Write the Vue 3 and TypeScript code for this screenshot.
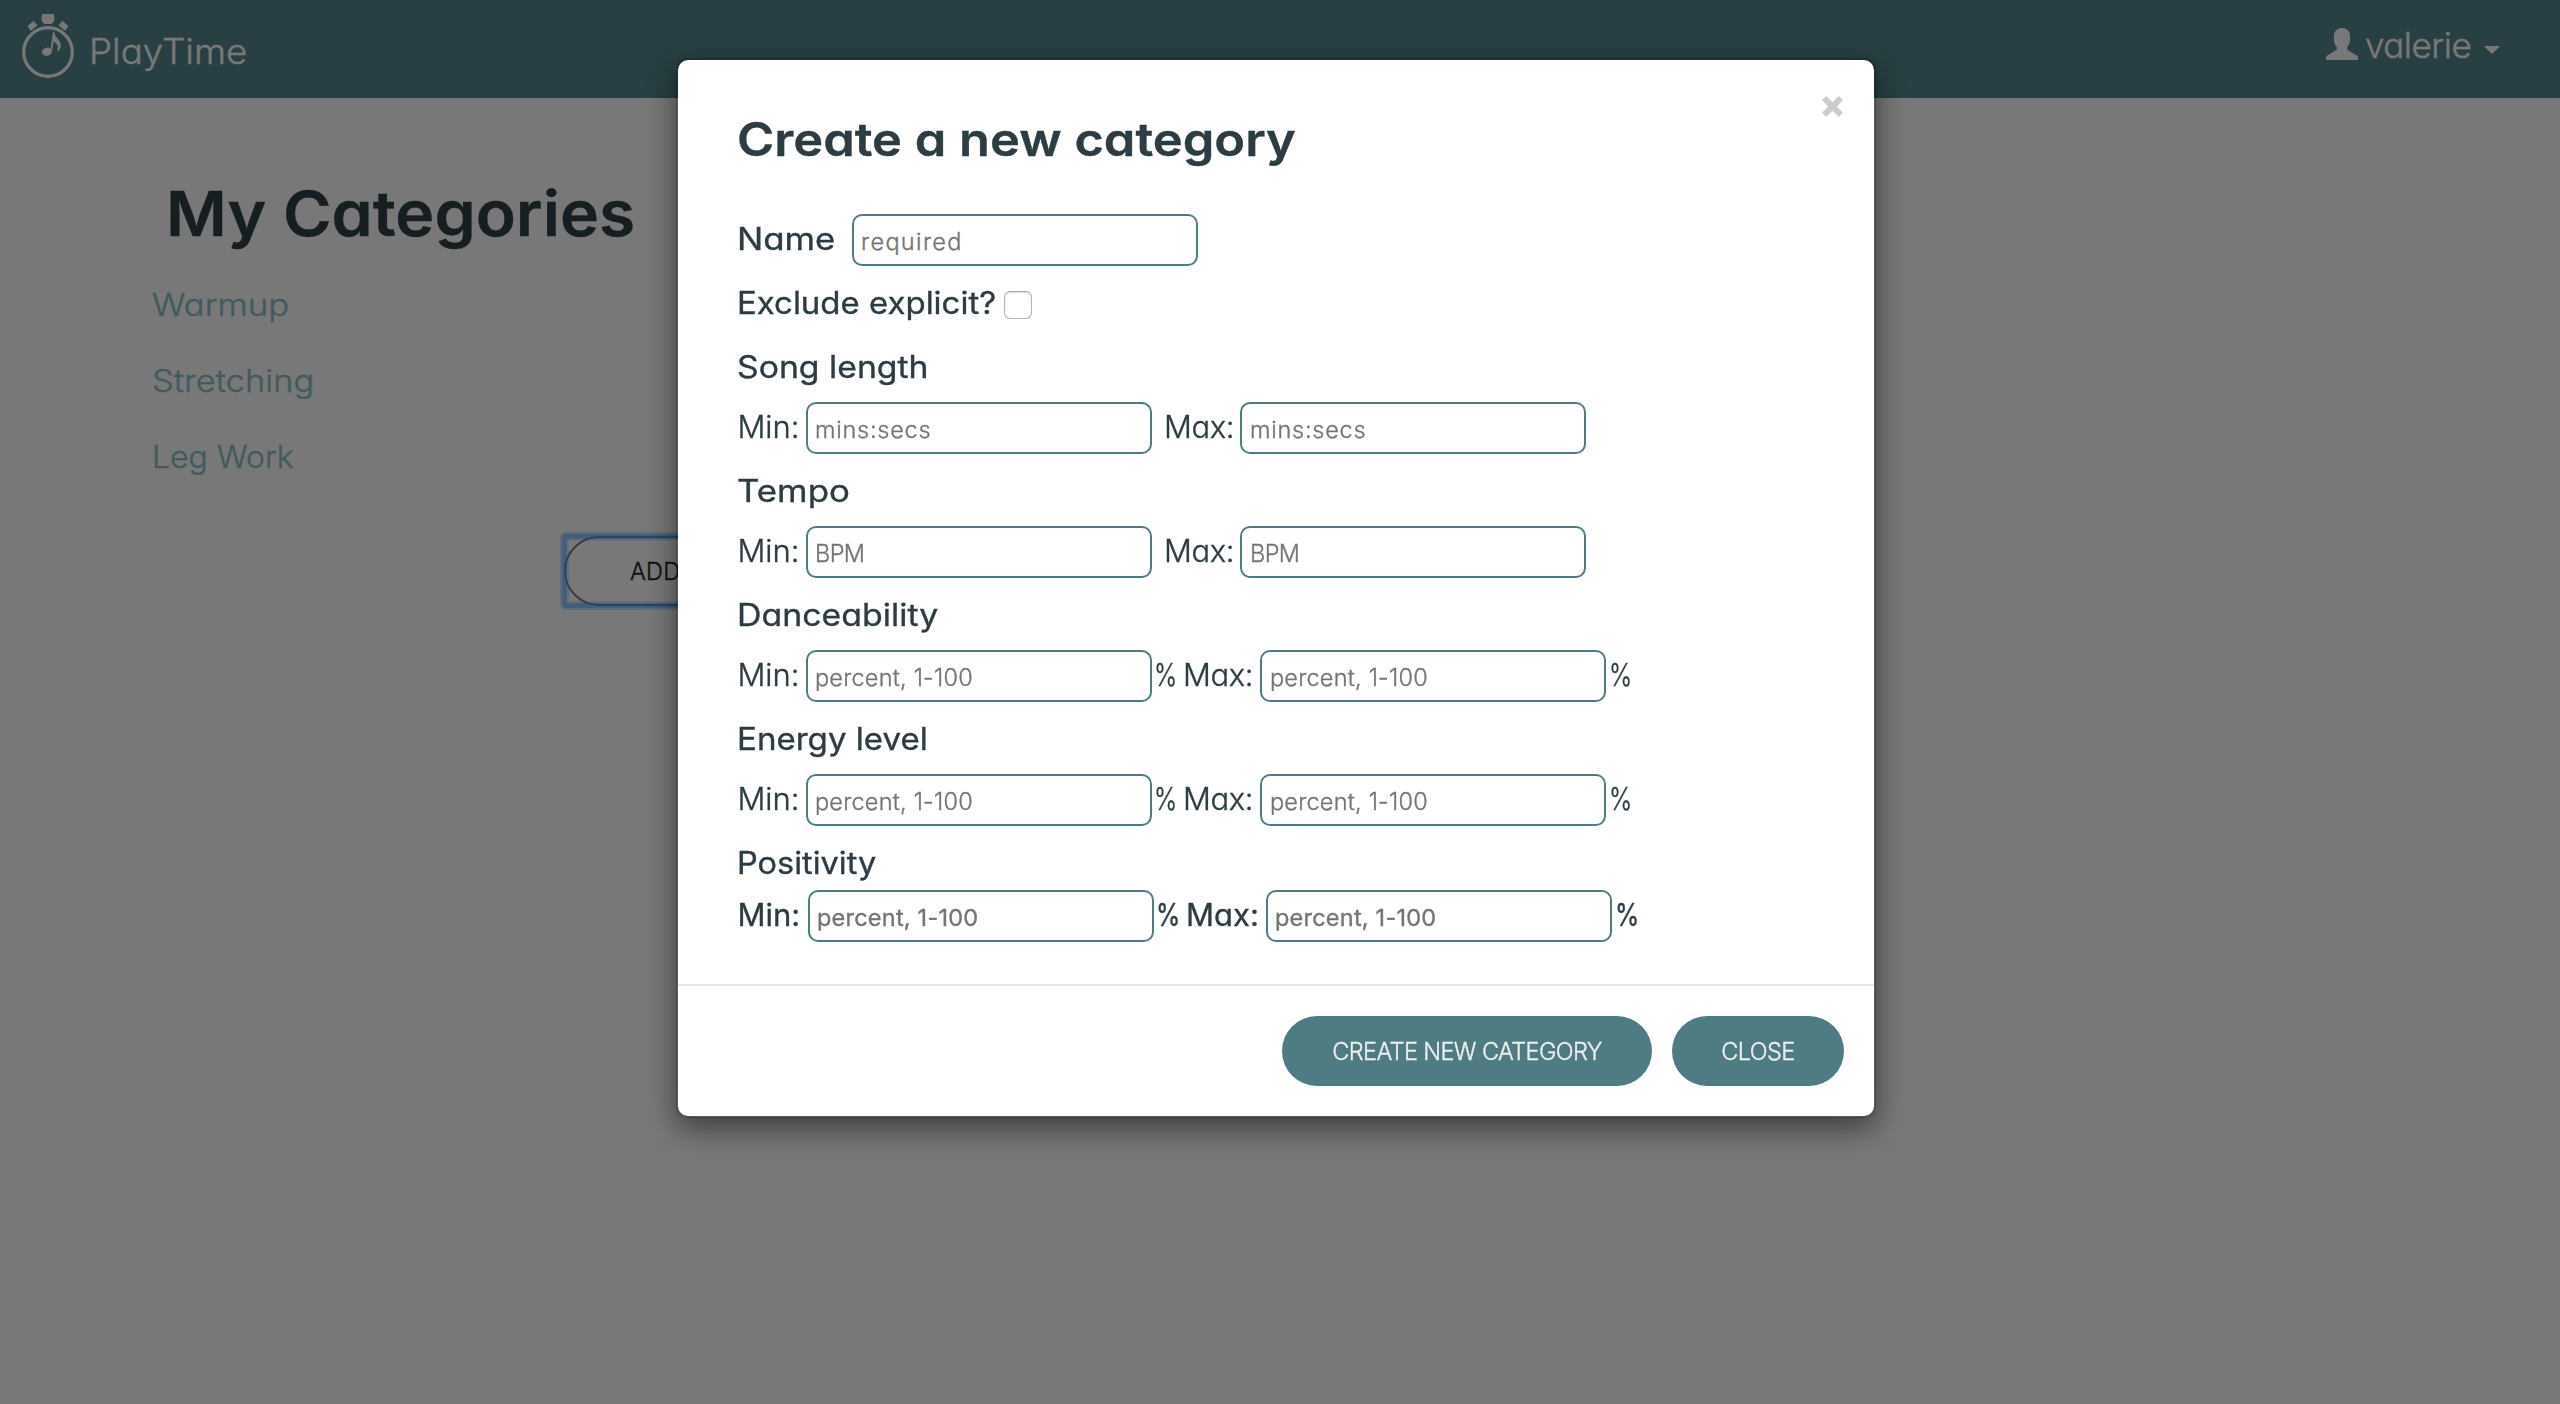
<script setup lang="ts">
interface Range {
  title: string
  hint: string
  hintClass: string
  titleClass: string
  percent: boolean
  strong?: boolean
}

const categories: { name: string; cls: string }[] = [
  { name: 'Warmup', cls: 'cat-warmup' },
  { name: 'Stretching', cls: 'cat-stretching' },
  { name: 'Leg Work', cls: 'cat-leg' },
]

const ranges: Range[] = [
  { title: 'Song length', hint: 'mins:secs', hintClass: 'hint-time', titleClass: 't-song', percent: false },
  { title: 'Tempo', hint: 'BPM', hintClass: 'hint-bpm', titleClass: 't-tempo', percent: false },
  { title: 'Danceability', hint: 'percent, 1-100', hintClass: 'hint-pct', titleClass: 't-dance', percent: true },
  { title: 'Energy level', hint: 'percent, 1-100', hintClass: 'hint-pct', titleClass: 't-energy', percent: true },
  { title: 'Positivity', hint: 'percent, 1-100', hintClass: 'hint-pct', titleClass: 't-pos', percent: true, strong: true },
]
</script>

<template>
  <div class="page">
    <nav class="navbar">
      <div class="brand">
        <svg class="logo" viewBox="0 0 52 64" width="52" height="64">
          <circle cx="26" cy="38" r="24.3" fill="none" stroke="currentColor" stroke-width="3.2" />
          <path d="M20.5 0h11q1.200 2 1 4.500q-.3 4.500-3.500 5.500h-6q-3.200-1-3.500-5.500q-.2-2.500 1-4.500z" fill="currentColor" />
          <path d="M6.500 12.200l5-4.500 2.900 3.600-5.600 4.500z" fill="currentColor" stroke="currentColor" stroke-width="1.500" stroke-linejoin="round" />
          <path d="M45.500 12.200l-5-4.500-2.900 3.600 5.600 4.500z" fill="currentColor" stroke="currentColor" stroke-width="1.500" stroke-linejoin="round" />
          <ellipse cx="25" cy="37.700" rx="5" ry="4.100" transform="rotate(-12 25 37.700)" fill="currentColor" />
          <path d="M28.200 37.500L31 18h1.400c.2 5.500 6.400 8 6.400 13.500 0 2-.9 4.300-2.600 5.800l-1-.6c1.600-4 .3-7.200-3.700-9.200L29.900 38z" fill="currentColor" />
        </svg>
        <span class="brand-name">PlayTime</span>
      </div>
      <div class="user">
        <svg class="person" viewBox="0 0 32 32" width="32" height="32">
          <path d="M16 0C20.500 0 24 3.200 24 8v4c0 3-1.500 5.500-3 7.500 0 1.500.5 2.300 1.500 3l8 4.700c1 .8 1.500 1.300 1.500 2.300V32H0v-2.500c0-1 .5-1.500 1.500-2.300l8-4.700c1-.7 1.500-1.500 1.500-3-1.500-2-3-4.500-3-7.500V8c0-4.800 3.500-8 8-8z" fill="currentColor" />
        </svg>
        <span class="user-name">valerie</span>
        <span class="caret"></span>
      </div>
    </nav>

    <main class="content">
      <h1>My Categories</h1>
      <ul class="categories">
        <li v-for="c in categories" :key="c.name"><a :class="c.cls">{{ c.name }}</a></li>
      </ul>
      <div class="add">ADD</div>
    </main>

    <div class="backdrop">
      <section class="modal">
        <header class="modal-header">
          <h2>Create a new category</h2>
          <svg class="close" viewBox="0 0 21 21" width="21" height="21">
            <path d="M4.300 0L10.500 6.200 16.700 0 21 4.300 14.800 10.500 21 16.700 16.700 21 10.500 14.800 4.300 21 0 16.700 6.200 10.500 0 4.300z" fill="#ccc" />
          </svg>
        </header>

        <div class="modal-body">
          <div class="row">
            <label class="name-label">Name</label>
            <input class="hint-req" type="text" placeholder="required" />
          </div>
          <div class="explicit">
            <label>Exclude explicit?</label>
            <input type="checkbox" />
          </div>
          <div v-for="r in ranges" :key="r.title" class="range" :class="{ percent: r.percent, strong: r.strong }">
            <h3 :class="r.titleClass">{{ r.title }}</h3>
            <div class="row">
              <label class="min">Min:</label>
              <input :class="r.hintClass" type="text" :placeholder="r.hint" />
              <span v-if="r.percent" class="unit"><span>%</span></span>
              <label class="max">Max:</label>
              <input :class="r.hintClass" type="text" :placeholder="r.hint" />
              <span v-if="r.percent" class="unit last"><span>%</span></span>
            </div>
          </div>
        </div>

        <footer class="modal-footer">
          <button class="create">CREATE NEW CATEGORY</button>
          <button class="dismiss">CLOSE</button>
        </footer>
      </section>
    </div>
  </div>
</template>

<style>
html,
body {
  margin: 0;
  background: #f0f0f0;
  overflow: hidden;
}
</style>

<style scoped>
.page {
  width: 2560px;
  height: 1404px;
  background: #f0f0f0;
  font-family: Inter, 'Open Sans', sans-serif;
  font-feature-settings: 'cv11';
  font-size: 31px;
  font-weight: 340;
  color: #2c3c42;
  white-space: nowrap;
  -webkit-text-stroke: 0.350px;
}

.page * {
  box-sizing: border-box;
}

/* Navigation bar */
.navbar {
  display: flex;
  justify-content: space-between;
  align-items: flex-start;
  height: 98px;
  padding: 0 60px 0 22px;
  background: #508086;
  color: #f0f0f0;
  font-size: 35px;
  line-height: 40px;
}

.brand,
.user {
  display: flex;
  align-items: flex-start;
}

.logo {
  margin-top: 14px;
}

.brand-name {
  margin: 31px 0 0 15px;
  transform: scaleX(1.05);
  transform-origin: left;
}

.person {
  margin-top: 28px;
}

.user-name {
  width: 118px;
  margin: 25px 0 0 7px;
  letter-spacing: -0.500px;
}

.caret {
  margin-top: 46px;
  margin-left: 1px;
  border-top: 8px solid #f0f0f0;
  border-left: 8px solid transparent;
  border-right: 8px solid transparent;
}

/* Category list */
.content {
  padding: 75px 0 0 152px;
}

h1 {
  width: fit-content;
  margin: 0 0 14px 13.500px;
  font-size: 62.500px;
  line-height: 80px;
  font-weight: 600;
  transform: scaleX(1.056);
  transform-origin: left;
}

.categories {
  margin: 0;
  padding: 0;
  list-style: none;
  line-height: 76px;
  color: #84b4bc;
}

.categories a {
  display: inline-block;
  transform-origin: left;
}

.cat-warmup {
  transform: scaleX(1.12);
}

.cat-stretching {
  transform: scaleX(1.11);
}

.cat-leg {
  transform: scaleX(1.03);
}

.add {
  position: relative;
  width: 300px;
  height: 70px;
  margin: 41px 0 0 412px;
  padding-left: 64px;
  border: 2px solid #777;
  border-radius: 35px;
  font-size: 23.500px;
  line-height: 68px;
  color: #222;
  letter-spacing: 0.300px;
}

.add::after {
  content: '';
  position: absolute;
  inset: -4px;
  border: 5px solid rgba(59, 153, 252, 0.58);
  border-radius: 4px;
  box-shadow:
    0 0 0 2px rgba(59, 153, 252, 0.28),
    inset 0 0 0 2px rgba(59, 153, 252, 0.2);
}

/* Dialog */
.backdrop {
  position: fixed;
  inset: 0;
  padding: 58px 0 0 676px;
  background: rgba(0, 0, 0, 0.5);
}

.modal {
  width: 1200px;
  border: 2px solid rgba(0, 0, 0, 0.2);
  border-radius: 12px;
  background: #fff;
  background-clip: padding-box;
  box-shadow: 0 10px 30px rgba(0, 0, 0, 0.5);
}

.modal-header {
  display: flex;
  justify-content: space-between;
  align-items: flex-start;
  padding: 36px 31px 0 59px;
}

h2 {
  margin: 13px 0 0;
  font-size: 46.500px;
  line-height: 60px;
  font-weight: 600;
  transform: scaleX(1.088);
  transform-origin: left;
}

.close {
  display: block;
}

.modal-body {
  padding: 45px 0 42px 59px;
}

.row {
  display: flex;
  height: 52px;
  line-height: 50px;
}

.row input {
  width: 346px;
  height: 52px;
  margin: 0;
  padding: 3px 7px 0;
  border: 2px solid #4e7c82;
  border-radius: 10px;
  background: #fff;
  font: inherit;
  font-feature-settings: 'cv11';
  font-size: 23.500px;
  line-height: 45px;
  outline: none;
}

.row .max + input {
  padding-left: 8px;
}

.row input::placeholder {
  color: #757575;
  opacity: 1;
}

.hint-req {
  letter-spacing: 1.350px;
}

.hint-time {
  letter-spacing: 0.750px;
}

.hint-bpm {
  letter-spacing: -0.600px;
}

.hint-pct {
  letter-spacing: 0.220px;
}

.name-label {
  width: 115px;
  font-weight: 400;
  transform: scaleX(1.124);
  transform-origin: left;
}

.explicit {
  display: flex;
  height: 44px;
  margin: 15px 0 20px;
  font-weight: 400;
  line-height: 44px;
}

.explicit label {
  width: 267px;
  transform: scaleX(1.063);
  transform-origin: left;
}

.explicit input {
  appearance: none;
  width: 28px;
  height: 28px;
  margin: 10px 0 0;
  border: 1px solid #b4b4b4;
  border-top-color: #a4a4a4;
  border-radius: 6px;
  background: #fff;
  box-shadow: inset 0 1px 2px rgba(0, 0, 0, 0.14);
}

.range {
  margin-top: 15px;
}

h3 {
  width: fit-content;
  margin: 0 0 13px;
  font-size: 31px;
  font-weight: 400;
  line-height: 44px;
  transform-origin: left;
}

.t-song {
  transform: scaleX(1.089);
}

.t-tempo {
  transform: scaleX(1.125);
}

.t-dance {
  transform: scaleX(1.093);
}

.t-energy {
  transform: scaleX(1.067);
}

.t-pos {
  transform: scaleX(1.048);
}

.min {
  width: 69px;
  text-indent: 0.400px;
}

.max {
  width: 76px;
  margin-left: 12px;
  letter-spacing: -0.400px;
}

.percent .max {
  width: 77px;
  margin-left: 0;
}

.unit {
  width: 31px;
  padding-left: 1.500px;
}

.unit.last {
  padding-left: 2.500px;
}

.unit > span {
  display: inline-block;
  transform: scaleX(0.8);
  transform-origin: left;
}

.strong {
  font-weight: 420;
}

.strong h3 {
  margin-bottom: 5px;
}

.strong .min {
  width: 71px;
}

.strong .max {
  width: 80px;
  letter-spacing: 0;
}

.strong .unit {
  width: 32px;
}

.strong .row .max + input {
  padding-left: 7px;
}

.modal-footer {
  display: flex;
  justify-content: flex-end;
  gap: 20px;
  padding: 30px;
  border-top: 2px solid #e5e5e5;
}

.modal-footer button {
  height: 70px;
  padding: 1px 0 0;
  border: 0;
  border-radius: 35px;
  background: #4e7c82;
  color: #eee;
  font: inherit;
  font-size: 23.500px;
  line-height: 69px;
  letter-spacing: -0.620px;
}

.create {
  width: 370px;
}

.dismiss {
  width: 172px;
}
</style>
